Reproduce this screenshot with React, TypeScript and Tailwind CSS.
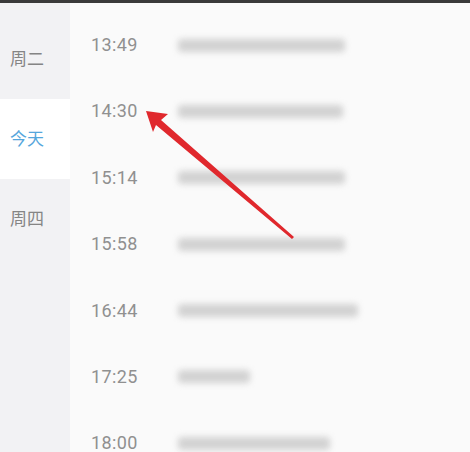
import React from "react";

const rows = [
  { t: "13:49", w: 167 },
  { t: "14:30", w: 165 },
  { t: "15:14", w: 167 },
  { t: "15:58", w: 167 },
  { t: "16:44", w: 180 },
  { t: "17:25", w: 72 },
  { t: "18:00", w: 152 },
];

export default function App() {
  return (
    <div
      className="relative w-[470px] h-[452px] overflow-hidden bg-[#fafafa] border-t-[3px] border-[#3a3a3a]"
      style={{ fontFamily: 'Roboto, "Noto Sans CJK SC", sans-serif' }}
    >
      <div className="flex h-full">
        <div className="w-[70px] shrink-0 bg-[#f2f2f4] flex flex-col pt-[16px]">
          <div className="h-[80px] flex items-center pl-[10px] pt-[2px] text-[17px] text-[#858585]">周二</div>
          <div className="h-[80px] flex items-center pl-[10px] pt-[2px] text-[17px] text-[#56a6dc] bg-white">今天</div>
          <div className="h-[80px] flex items-center pl-[10px] pt-[2px] text-[17px] text-[#858585]">周四</div>
        </div>
        <div className="flex-1 flex flex-col pt-[25px] pl-[21px]">
          {rows.map((r) => (
            <div key={r.t} className="h-[66.4px] shrink-0 flex items-start">
              <div className="w-[87px] text-[18px] leading-[34px] text-[#909090] tracking-[0.4px]">{r.t}</div>
              <div className="h-[34px] flex items-center">
                <div
                  className="h-[13px] rounded-sm bg-[#d2d2d2] blur-[3px]"
                  style={{ width: r.w }}
                />
              </div>
            </div>
          ))}
        </div>
      </div>
      <svg className="absolute left-0 top-0" width="470" height="452" viewBox="0 0 470 452">
        <polygon
          points="146,108 168,111 161,117 294,234 292,236 156,122 153,129"
          fill="#e0282d"
        />
      </svg>
    </div>
  );
}
